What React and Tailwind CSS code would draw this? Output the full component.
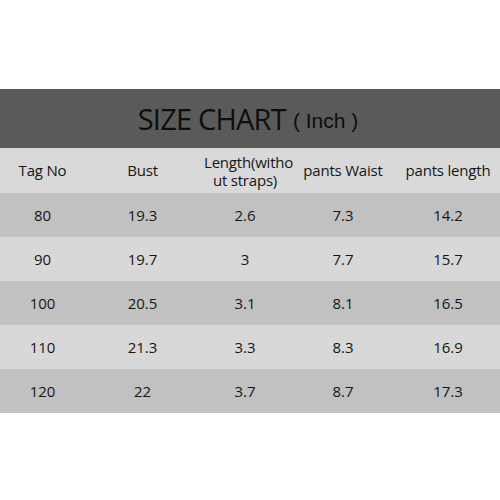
const headers = ['Tag No', 'Bust', 'Length(witho ut straps)', 'pants Waist', 'pants length']

const rows = [
  ['80', '19.3', '2.6', '7.3', '14.2'],
  ['90', '19.7', '3', '7.7', '15.7'],
  ['100', '20.5', '3.1', '8.1', '16.5'],
  ['110', '21.3', '3.3', '8.3', '16.9'],
  ['120', '22', '3.7', '8.7', '17.3'],
]

const cols = 'grid grid-cols-[85px_115px_90px_106px_104px]'

export default function App() {
  return (
    <div className="w-[500px] h-[500px] bg-white font-['Open_Sans',sans-serif] text-[#161616]">
      <div className="h-[89px]" />
      <div className="h-[59px] bg-[#5a5a5a] flex items-center justify-center gap-[7px] pr-1">
        <span className="text-[29px] font-medium tracking-[-0.8px] text-[#0e0e0e]">SIZE CHART</span>
        <span className="text-[21px] mt-1 text-[#0e0e0e] font-['Liberation_Sans',sans-serif]">( Inch )</span>
      </div>
      <div className={`${cols} h-[45px] bg-[#d9d9d9] items-center text-center text-[15px] tracking-[-0.2px]`}>
        {headers.map((h, i) => (
          <div key={i} className={i === 2 ? 'leading-[18px] px-1' : ''}>
            {i === 2 ? (
              <>
                <div>Length(witho</div>
                <div>ut straps)</div>
              </>
            ) : (
              h
            )}
          </div>
        ))}
      </div>
      {rows.map((r, ri) => (
        <div
          key={ri}
          className={`${cols} h-[44px] items-center text-center text-[15px] ${
            ri % 2 === 0 ? 'bg-[#c1c1c1]' : 'bg-[#d8d8d8]'
          }`}
        >
          {r.map((c, ci) => (
            <div key={ci}>{c}</div>
          ))}
        </div>
      ))}
    </div>
  )
}
